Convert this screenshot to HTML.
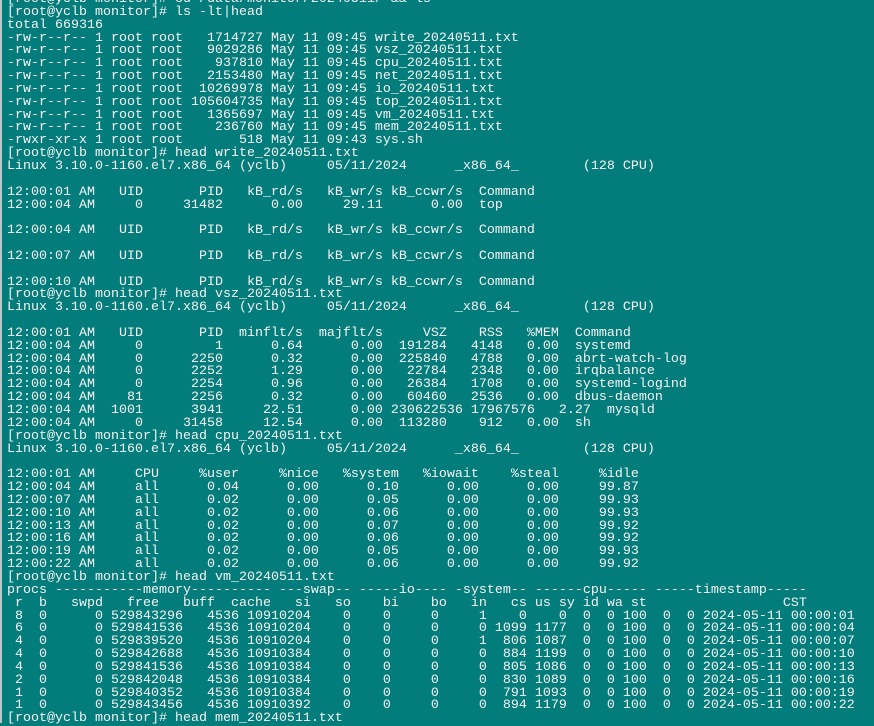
<!DOCTYPE html>
<html><head><meta charset="utf-8">
<style>
html,body{margin:0;padding:0;background:#027d7b;width:874px;height:723px;overflow:hidden}
pre{position:absolute;left:7px;top:-6px;margin:0;font-family:"Liberation Mono",monospace;font-size:13.33px;line-height:12.84px;color:#f4f4f4;white-space:pre}
.edge{position:absolute;left:0;top:0;width:2px;height:723px;background:#b8c8c8}
</style></head><body>
<div class="edge"></div>
<pre>[root@yclb monitor]# cd /data/monitor/20240511/ &amp;&amp; ls
[root@yclb monitor]# ls -lt|head
total 669316
-rw-r--r-- 1 root root   1714727 May 11 09:45 write_20240511.txt
-rw-r--r-- 1 root root   9029286 May 11 09:45 vsz_20240511.txt
-rw-r--r-- 1 root root    937810 May 11 09:45 cpu_20240511.txt
-rw-r--r-- 1 root root   2153480 May 11 09:45 net_20240511.txt
-rw-r--r-- 1 root root  10269978 May 11 09:45 io_20240511.txt
-rw-r--r-- 1 root root 105604735 May 11 09:45 top_20240511.txt
-rw-r--r-- 1 root root   1365697 May 11 09:45 vm_20240511.txt
-rw-r--r-- 1 root root    236760 May 11 09:45 mem_20240511.txt
-rwxr-xr-x 1 root root       518 May 11 09:43 sys.sh
[root@yclb monitor]# head write_20240511.txt
Linux 3.10.0-1160.el7.x86_64 (yclb)     05/11/2024      _x86_64_        (128 CPU)

12:00:01 AM   UID       PID   kB_rd/s   kB_wr/s kB_ccwr/s  Command
12:00:04 AM     0     31482      0.00     29.11      0.00  top

12:00:04 AM   UID       PID   kB_rd/s   kB_wr/s kB_ccwr/s  Command

12:00:07 AM   UID       PID   kB_rd/s   kB_wr/s kB_ccwr/s  Command

12:00:10 AM   UID       PID   kB_rd/s   kB_wr/s kB_ccwr/s  Command
[root@yclb monitor]# head vsz_20240511.txt
Linux 3.10.0-1160.el7.x86_64 (yclb)     05/11/2024      _x86_64_        (128 CPU)

12:00:01 AM   UID       PID  minflt/s  majflt/s     VSZ    RSS   %MEM  Command
12:00:04 AM     0         1      0.64      0.00  191284   4148   0.00  systemd
12:00:04 AM     0      2250      0.32      0.00  225840   4788   0.00  abrt-watch-log
12:00:04 AM     0      2252      1.29      0.00   22784   2348   0.00  irqbalance
12:00:04 AM     0      2254      0.96      0.00   26384   1708   0.00  systemd-logind
12:00:04 AM    81      2256      0.32      0.00   60460   2536   0.00  dbus-daemon
12:00:04 AM  1001      3941     22.51      0.00 230622536 17967576   2.27  mysqld
12:00:04 AM     0     31458     12.54      0.00  113280    912   0.00  sh
[root@yclb monitor]# head cpu_20240511.txt
Linux 3.10.0-1160.el7.x86_64 (yclb)     05/11/2024      _x86_64_        (128 CPU)

12:00:01 AM     CPU     %user     %nice   %system   %iowait    %steal     %idle
12:00:04 AM     all      0.04      0.00      0.10      0.00      0.00     99.87
12:00:07 AM     all      0.02      0.00      0.05      0.00      0.00     99.93
12:00:10 AM     all      0.02      0.00      0.06      0.00      0.00     99.93
12:00:13 AM     all      0.02      0.00      0.07      0.00      0.00     99.92
12:00:16 AM     all      0.02      0.00      0.06      0.00      0.00     99.92
12:00:19 AM     all      0.02      0.00      0.05      0.00      0.00     99.93
12:00:22 AM     all      0.02      0.00      0.06      0.00      0.00     99.92
[root@yclb monitor]# head vm_20240511.txt
procs -----------memory---------- ---swap-- -----io---- -system-- ------cpu----- -----timestamp-----
 r  b   swpd   free   buff  cache   si   so    bi    bo   in   cs us sy id wa st                 CST
 8  0      0 529843296   4536 10910204    0    0     0     1    0    0  0  0 100  0  0 2024-05-11 00:00:01
 6  0      0 529841536   4536 10910204    0    0     0     0 1099 1177  0  0 100  0  0 2024-05-11 00:00:04
 4  0      0 529839520   4536 10910204    0    0     0     1  806 1087  0  0 100  0  0 2024-05-11 00:00:07
 4  0      0 529842688   4536 10910384    0    0     0     0  884 1199  0  0 100  0  0 2024-05-11 00:00:10
 4  0      0 529841536   4536 10910384    0    0     0     0  805 1086  0  0 100  0  0 2024-05-11 00:00:13
 2  0      0 529842048   4536 10910384    0    0     0     0  830 1089  0  0 100  0  0 2024-05-11 00:00:16
 1  0      0 529840352   4536 10910384    0    0     0     0  791 1093  0  0 100  0  0 2024-05-11 00:00:19
 1  0      0 529843456   4536 10910392    0    0     0     0  894 1179  0  0 100  0  0 2024-05-11 00:00:22
[root@yclb monitor]# head mem_20240511.txt
</pre>
</body></html>
